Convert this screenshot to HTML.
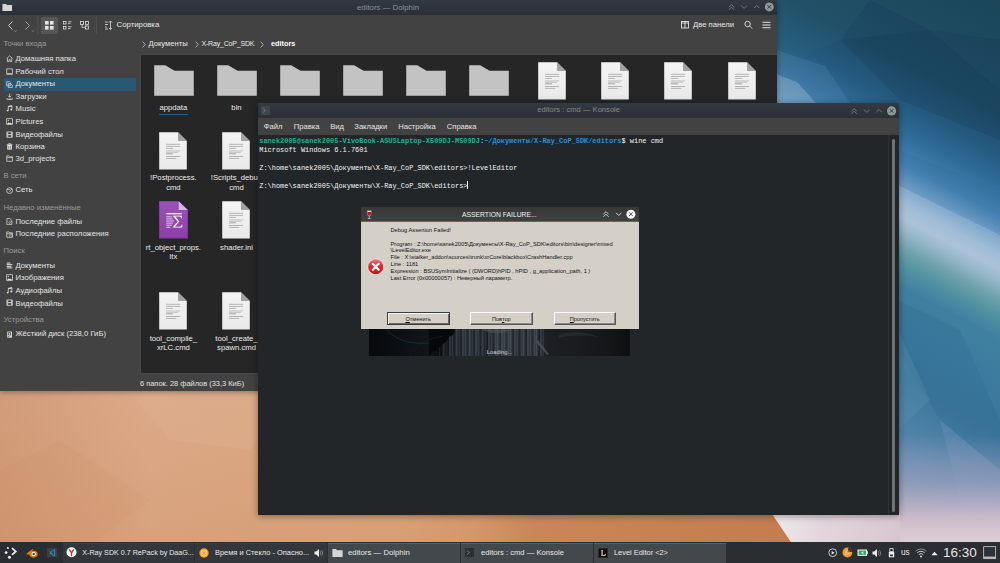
<!DOCTYPE html>
<html><head><meta charset="utf-8"><title>desktop</title>
<style>
*{box-sizing:border-box;margin:0;padding:0}
html,body{width:1000px;height:563px;overflow:hidden;background:#3d7394;font-family:"Liberation Sans",sans-serif;}
.abs,.abs *{position:absolute}
.abs .term span,.abs .btn u{position:static}
.t{position:absolute;white-space:pre;line-height:10px;height:10px;font-size:7.6px;color:#e8e8e8}
/* wallpaper */
#wp{left:0;top:0;width:1000px;height:563px}
/* dolphin */
#dol{left:0;top:0;width:776.6px;height:390.5px;background:#424242;box-shadow:0 1px 6px rgba(0,0,0,0.35)}
#dol .tb{left:0;top:0;width:776.6px;height:15px;background:linear-gradient(#323940,#2a2f35)}
#dol .view{left:139.5px;top:53.5px;width:637.1px;height:320.5px;background:#262626;border:1px solid #484848;border-right:none}
.sb .t{left:15.5px;color:#e4e4e4;font-size:7.7px}
.sb .h{left:3.5px;color:#9b9b9b}
.lab{position:absolute;width:70px;text-align:center;font-size:7.7px;line-height:9.3px;color:#ececec;white-space:pre}
/* konsole */
#kon{left:258.3px;top:102.7px;width:640.5px;height:412.5px;background:#222628;box-shadow:0 1px 7px rgba(0,0,0,0.4)}
#kon .tb{left:0;top:0;width:641px;height:15.5px;background:linear-gradient(#333940,#2b3035)}
#kon .mb{left:0;top:15.5px;width:641px;height:16.8px;background:#424242}
#kon .mb .t{color:#e6e6e6;top:3.4px}
.term{position:absolute;left:1px;font-family:"Liberation Mono",monospace;font-size:6.94px;line-height:9px;height:9px;white-space:pre;color:#f4f4f4}
.g{color:#1bb595;font-weight:bold}.b{color:#2c90d4;font-weight:bold}
/* dialog */
#dlg{left:361px;top:207.2px;width:278.2px;height:121.8px;background:#d4d0c8}
#dlg .tb{left:0;top:0;width:278.2px;height:14.8px;background:linear-gradient(#383838,#404040);border-bottom:1px solid #2c78a4}
#dlg .m{position:absolute;left:29.5px;font-size:5.7px;line-height:7px;height:7px;color:#111;white-space:pre}
.btn{position:absolute;top:104.5px;height:13.5px;width:62.5px;background:#d4d0c8;border:1px solid;border-color:#fbfbfb #555 #555 #fbfbfb;box-shadow:inset -1px -1px 0 #8d8a85;font-size:5.6px;line-height:12.4px;text-align:center;color:#111}
/* panel */
#pan{left:0;top:542px;width:1000px;height:21px;background:#2a2e32}
#pan .t{color:#e8e8e8;font-size:7.2px;top:5.5px}
.task{position:absolute;top:0.5px;height:21px;background:#43484d;border-top:1px solid #5a5f64}
.task.d{background:#33373c;border-top-color:#3a3f44}
</style></head><body>
<div class="abs" id="wp">
<svg width="1000" height="563" viewBox="0 0 1000 563">
<defs>
<linearGradient id="sky" gradientUnits="userSpaceOnUse" x1="1000" y1="0" x2="718.6" y2="529.8">
<stop offset="0.0000" stop-color="#183f55"/>
<stop offset="0.1667" stop-color="#1e4b65"/>
<stop offset="0.2283" stop-color="#255a80"/>
<stop offset="0.2717" stop-color="#2f6c99"/>
<stop offset="0.3167" stop-color="#4a85b3"/>
<stop offset="0.3450" stop-color="#7ba5cb"/>
<stop offset="0.3750" stop-color="#a0bcd6"/>
<stop offset="0.3967" stop-color="#abc3d9"/>
<stop offset="0.4167" stop-color="#94b6c8"/>
<stop offset="0.4417" stop-color="#6fa2ab"/>
<stop offset="0.4667" stop-color="#5292a2"/>
<stop offset="0.5000" stop-color="#3f80a0"/>
<stop offset="0.6333" stop-color="#3b769c"/>
<stop offset="0.7400" stop-color="#5a88ad"/>
<stop offset="0.8667" stop-color="#7a9ab8"/>
<stop offset="1.0000" stop-color="#8aa4c0"/>
</linearGradient>
<linearGradient id="haze" gradientUnits="userSpaceOnUse" x1="0" y1="435" x2="0" y2="545"><stop offset="0" stop-color="#a9a4c4" stop-opacity="0"/><stop offset="0.42" stop-color="#aca4c0" stop-opacity="0.55"/><stop offset="0.75" stop-color="#d0bdca" stop-opacity="0.95"/><stop offset="1" stop-color="#e0d0d6" stop-opacity="1"/></linearGradient>
<linearGradient id="pk" gradientUnits="userSpaceOnUse" x1="785" y1="0" x2="900" y2="0"><stop offset="0" stop-color="#ebe5e7"/><stop offset="0.3" stop-color="#e2d6dc"/><stop offset="1" stop-color="#d8c6cf"/></linearGradient>
<linearGradient id="sand" gradientUnits="userSpaceOnUse" x1="0" y1="0" x2="790" y2="0">
<stop offset="0" stop-color="#d29c7a"/>
<stop offset="0.19" stop-color="#dcaa88"/>
<stop offset="0.33" stop-color="#dba884"/>
<stop offset="0.5" stop-color="#dca87f"/>
<stop offset="0.6" stop-color="#d79d70"/>
<stop offset="0.68" stop-color="#cb895b"/>
<stop offset="1" stop-color="#c47e4e"/>
</linearGradient>
<linearGradient id="sandv" gradientUnits="userSpaceOnUse" x1="0" y1="395" x2="0" y2="545"><stop offset="0" stop-color="#c07848" stop-opacity="0"/><stop offset="1" stop-color="#c07848" stop-opacity="0.18"/></linearGradient>
</defs>
<rect x="0" y="0" width="1000" height="563" fill="url(#sky)"/>
<g>
<polygon points="776,0 870,0 840,40 776,70" fill="#2c6b74" opacity="0.22"/>
<polygon points="870,0 1000,0 1000,40 930,30" fill="#235c66" opacity="0.25"/>
<polygon points="840,40 930,30 1000,90 1000,140 900,100" fill="#123650" opacity="0.22"/>
<polygon points="776,74 797,82 816,103 776,103" fill="#a9c6dc" opacity="0.40"/>
<polygon points="776,50 825,66 850,103 816,103 797,82 776,74" fill="#6a9cc0" opacity="0.20"/>
<polygon points="898,150 1000,190 1000,235 898,185" fill="#2c6aa0" opacity="0.25"/>
<polygon points="898,300 960,330 1000,420 1000,470 940,420 898,350" fill="#2f6a92" opacity="0.30"/>
<polygon points="898,330 930,400 898,430" fill="#5f98b2" opacity="0.25"/>
<polygon points="940,420 1000,470 1000,520 960,500" fill="#7f9cc0" opacity="0.25"/>
</g>
<rect x="770" y="420" width="230" height="125" fill="url(#haze)"/>
<polygon points="0,380 760,380 795,545 0,545" fill="url(#sand)"/>
<polygon points="0,380 760,380 795,545 0,545" fill="url(#sandv)"/>
<polygon points="0,470 60,440 150,500 90,545 0,545" fill="#c88a62" opacity="0.12"/>
<polygon points="130,392 300,392 250,450 170,440" fill="#e6bc9c" opacity="0.18"/>
<polygon points="772,514 900,514 900,545 793,545" fill="url(#pk)"/>
</svg>
</div>

<!-- DOLPHIN -->
<div class="abs" id="dol">
<div class="tb"></div>
<svg style="left:2px;top:4.2px" width="10.500" height="7.200" viewBox="0 0 12 9"><path d="M0 0h4.500l1 1.200H12V9H0z" fill="#d6d6d6"/></svg>
<div class="t" style="left:357px;top:2.8px;color:#8d9094;font-size:7.8px">editors — Dolphin</div>
<!-- title buttons -->
<svg style="left:725px;top:1px" width="50" height="12" viewBox="0 0 50 12" fill="none" stroke="#79818a" stroke-width="0.9"><path d="M4 6.2l2.6-2.6 2.6 2.6M4 8.8l2.6-2.6 2.6 2.6"/><path d="M16.3 4.6l2.8 2.8 2.8-2.8"/><path d="M29 7.2l2.8-2.8 2.8 2.8"/><circle cx="44.3" cy="5.9" r="4.5" fill="#8b9998" stroke="none"/><path d="M42.5 4.1l3.6 3.6M46.1 4.1l-3.6 3.6" stroke="#2d3136" stroke-width="0.9"/></svg>
<!-- toolbar -->
<svg style="left:0;top:15px" width="200" height="22" viewBox="0 0 200 22" fill="none" stroke="#dcdcdc" stroke-width="0.9">
<path d="M12.500 6.500l-4 4 4 4"/><path d="M25.500 6.500l4 4-4 4" stroke="#a8a8a8"/><path d="M14.500 15.500l1 1 1-1M32 15.500l1 1 1-1" stroke-width="0.700" stroke="#b0b0b0"/>
<path d="M37.800 1.500v17.500M96.300 1.500v17.500" stroke="#565656" stroke-width="0.900"/>
<rect x="41" y="2" width="17" height="17" rx="1.5" fill="#565656" stroke="none"/>
<g fill="#e4e4e4" stroke="none"><rect x="45" y="6" width="3.6" height="3.6"/><rect x="50" y="6" width="3.6" height="3.6"/><rect x="45" y="11" width="3.6" height="3.6"/><rect x="50" y="11" width="3.6" height="3.6"/></g>
<g stroke-width="0.8"><rect x="63.4" y="6.4" width="2.6" height="2.6"/><rect x="63.4" y="11.4" width="2.6" height="2.6"/><path d="M68 6.8h3.5M68 8.6h2.5M68 11.8h3.5M68 13.6h2.5"/></g>
<g stroke-width="0.8"><rect x="80.4" y="6.4" width="3" height="3"/><rect x="85.4" y="6.4" width="3" height="3"/><rect x="85.4" y="11" width="3" height="3"/><path d="M82 9.4v3h3.4"/></g>
<g stroke-width="0.8"><path d="M105 7h3M105 9.5h3M105 12h2M105 14h3"/><path d="M110.5 6v8.5M109 13l1.5 1.5L112 13M109 7.5L110.5 6 112 7.5"/></g>
</svg>
<div class="t" style="left:116.5px;top:19.5px;font-size:7.8px;color:#e8e8e8">Сортировка</div>
<svg style="left:678px;top:15px" width="98" height="22" viewBox="0 0 98 22" fill="none" stroke="#e4e4e4" stroke-width="0.9"><rect x="3.5" y="6.5" width="7" height="6.5"/><path d="M7 6.5V13M3.5 8h7"/><circle cx="69.6" cy="9" r="2.7"/><path d="M71.6 11l2.6 2.6"/><path d="M84.5 7.3h8M84.5 10h8M84.5 12.7h8" stroke-width="1.1"/></svg>
<div class="t" style="left:693px;top:19.5px;font-size:7.7px">Две панели</div>
<!-- breadcrumb -->
<svg style="left:141.6px;top:41px" width="4" height="7" viewBox="0 0 4 7"><path d="M0.600 0.600L3.300 3.500 0.600 6.400" stroke="#cfcfcf" stroke-width="0.750" fill="none"/></svg>
<div class="t" style="left:148.5px;top:38.5px;font-size:7.6px">Документы</div>
<svg style="left:194.6px;top:41px" width="4" height="7" viewBox="0 0 4 7"><path d="M0.600 0.600L3.300 3.500 0.600 6.400" stroke="#cfcfcf" stroke-width="0.750" fill="none"/></svg>
<div class="t" style="left:201.5px;top:38.5px;font-size:7.05px;letter-spacing:-0.22px">X-Ray_CoP_SDK</div>
<svg style="left:260.4px;top:41px" width="4" height="7" viewBox="0 0 4 7"><path d="M0.600 0.600L3.300 3.500 0.600 6.400" stroke="#cfcfcf" stroke-width="0.750" fill="none"/></svg>
<div class="t" style="left:271px;top:38.5px;font-size:7.3px;font-weight:bold;color:#fff">editors</div>
<!-- sidebar -->
<div class="sb">
<div style="left:4px;top:77.5px;width:132px;height:13px;background:#285874"></div>
<div class="t h" style="top:39.0px">Точки входа</div>
<div class="t" style="top:53.8px">Домашняя папка</div>
<div class="t" style="top:67.3px">Рабочий стол</div>
<div class="t" style="top:79px">Документы</div>
<div class="t" style="top:92.4px">Загрузки</div>
<div class="t" style="top:103.8px">Music</div>
<div class="t" style="top:117.3px">Pictures</div>
<div class="t" style="top:130.0px">Видеофайлы</div>
<div class="t" style="top:142.4px">Корзина</div>
<div class="t" style="top:153.8px">3d_projects</div>
<div class="t h" style="top:171.2px">В сети</div>
<div class="t" style="top:185.0px">Сеть</div>
<div class="t h" style="top:203.0px">Недавно изменённые</div>
<div class="t" style="top:217.2px">Последние файлы</div>
<div class="t" style="top:229.0px">Последние расположения</div>
<div class="t h" style="top:246.4px">Поиск</div>
<div class="t" style="top:261.2px">Документы</div>
<div class="t" style="top:272.6px">Изображения</div>
<div class="t" style="top:286.4px">Аудиофайлы</div>
<div class="t" style="top:298.8px">Видеофайлы</div>
<div class="t h" style="top:315.2px">Устройства</div>
<div class="t" style="top:329.0px">Жёсткий диск (238,0 ГиБ)</div>
</div>
<div id="sbi">
<svg style="left:5.600px;top:55.4px" width="7.200" height="7.200" viewBox="0 0 8 8"><path d="M0.6 4.2L4 0.9l3.4 3.3M1.6 3.6v3.8h1.7V5.2h1.4v2.2h1.7V3.6" stroke="#e2e2e2" stroke-width="0.8" fill="none"/></svg>
<svg style="left:5.600px;top:67.8px" width="7.200" height="7.200" viewBox="0 0 8 8"><rect x="0.8" y="1" width="6.4" height="5" stroke="#e2e2e2" stroke-width="0.8" fill="none"/><path d="M0.4 7.4h7.2" stroke="#e2e2e2" stroke-width="0.8" fill="none"/></svg>
<svg style="left:5.600px;top:80.6px" width="7.200" height="7.200" viewBox="0 0 8 8"><path d="M0.8 0.8h3l1 1v3.6h-4z" stroke="#e2e2e2" stroke-width="0.8" fill="none"/><path d="M2.6 3h2.6l1.8 1.6v2.8H2.6z" stroke="#e2e2e2" stroke-width="0.8" fill="none"/></svg>
<svg style="left:5.600px;top:93.0px" width="7.200" height="7.200" viewBox="0 0 8 8"><path d="M4 0.5v4M2.2 3l1.8 1.8L5.8 3M0.8 5.6c0 1 .6 1.2 1.4 1.2h3.6c.8 0 1.4-.2 1.4-1.2M0.6 7.6h6.8" stroke="#e2e2e2" stroke-width="0.8" fill="none"/></svg>
<svg style="left:5.600px;top:105.4px" width="7.200" height="7.200" viewBox="0 0 8 8"><path d="M2.6 6V1.4l4-0.8V5" stroke="#e2e2e2" stroke-width="0.8" fill="none"/><ellipse cx="1.8" cy="6.2" rx="1.1" ry="0.9" fill="#e2e2e2"/><ellipse cx="5.8" cy="5.2" rx="1.1" ry="0.9" fill="#e2e2e2"/><path d="M2.6 1.4l4-.8v1.2l-4 .8z" fill="#e2e2e2"/></svg>
<svg style="left:5.600px;top:117.8px" width="7.200" height="7.200" viewBox="0 0 8 8"><rect x="0.8" y="0.8" width="6.4" height="6.4" stroke="#e2e2e2" stroke-width="0.8" fill="none"/><path d="M1.2 6.6l1.8-2 1.2 1.2 1-.8 1.6 1.6z" fill="#e2e2e2"/><circle cx="2.6" cy="2.6" r="0.7" fill="#e2e2e2"/></svg>
<svg style="left:5.600px;top:130.6px" width="7.200" height="7.200" viewBox="0 0 8 8"><rect x="0.6" y="0.6" width="6.8" height="6.8" fill="#e2e2e2"/><rect x="2.4" y="1.4" width="3.2" height="2.2" fill="#424242"/><rect x="2.4" y="4.6" width="3.2" height="2" fill="#424242"/><path d="M1.1 1.6h.7M1.1 3.2h.7M1.1 4.8h.7M1.1 6.4h.7M6.2 1.6h.7M6.2 3.2h.7M6.2 4.8h.7M6.2 6.4h.7" stroke="#424242" stroke-width="0.6"/></svg>
<svg style="left:5.600px;top:143.0px" width="7.200" height="7.200" viewBox="0 0 8 8"><path d="M1.4 2.2h5.2v5.2H1.4z" fill="#e2e2e2"/><path d="M0.8 1.6h6.4M3 1.4V0.6h2v.8" stroke="#e2e2e2" stroke-width="0.8" fill="none"/><path d="M3 3.4v3M5 3.4v3" stroke="#424242" stroke-width="0.6"/></svg>
<svg style="left:5.600px;top:155.4px" width="7.200" height="7.200" viewBox="0 0 8 8"><path d="M0.8 1h2.6l.8 1h3v5H0.8zM0.8 3h6.4" stroke="#e2e2e2" stroke-width="0.8" fill="none"/></svg>
<svg style="left:5.600px;top:186.6px" width="7.200" height="7.200" viewBox="0 0 8 8"><circle cx="4" cy="4" r="3.3" stroke="#e2e2e2" stroke-width="0.8" fill="none"/><path d="M1.2 2.6c1.5 1 2.6-.4 3.6.6s-1.2 1.4-.4 2.6M5.6 1.4c-.4 1 .6 1.6 1.6 1.6" stroke="#e2e2e2" stroke-width="0.8" fill="none"/></svg>
<svg style="left:5.600px;top:217.6px" width="7.200" height="7.200" viewBox="0 0 8 8"><path d="M1 0.6h3.4l2 2v4.8H1z" stroke="#e2e2e2" stroke-width="0.8" fill="none"/><circle cx="5" cy="5.2" r="1.7" fill="#424242" stroke="#e2e2e2" stroke-width="0.6"/><path d="M5 4.4v.9h.8" stroke="#e2e2e2" stroke-width="0.5" fill="none"/></svg>
<svg style="left:5.600px;top:230.6px" width="7.200" height="7.200" viewBox="0 0 8 8"><path d="M0.8 1h2.6l.8 1h3v5H0.8zM0.8 3h6.4" stroke="#e2e2e2" stroke-width="0.8" fill="none"/><circle cx="5.2" cy="5.2" r="1.6" fill="#424242" stroke="#e2e2e2" stroke-width="0.6"/><path d="M5.2 4.4v.9h.7" stroke="#e2e2e2" stroke-width="0.5" fill="none"/></svg>
<svg style="left:5.600px;top:261.8px" width="7.200" height="7.200" viewBox="0 0 8 8"><path d="M0.8 1.2h4M0.8 3h6.4M0.8 4.8h5M0.8 6.6h6.4" stroke="#e2e2e2" stroke-width="1.1" fill="none"/></svg>
<svg style="left:5.600px;top:274.2px" width="7.200" height="7.200" viewBox="0 0 8 8"><rect x="0.8" y="0.8" width="6.4" height="6.4" stroke="#e2e2e2" stroke-width="0.8" fill="none"/><path d="M1.2 6.6l1.8-2 1.2 1.2 1-.8 1.6 1.6z" fill="#e2e2e2"/><circle cx="2.6" cy="2.6" r="0.7" fill="#e2e2e2"/></svg>
<svg style="left:5.600px;top:287.0px" width="7.200" height="7.200" viewBox="0 0 8 8"><path d="M2.6 6V1.4l4-0.8V5" stroke="#e2e2e2" stroke-width="0.8" fill="none"/><ellipse cx="1.8" cy="6.2" rx="1.1" ry="0.9" fill="#e2e2e2"/><ellipse cx="5.8" cy="5.2" rx="1.1" ry="0.9" fill="#e2e2e2"/><path d="M2.6 1.4l4-.8v1.2l-4 .8z" fill="#e2e2e2"/></svg>
<svg style="left:5.600px;top:299.4px" width="7.200" height="7.200" viewBox="0 0 8 8"><rect x="0.6" y="0.6" width="6.8" height="6.8" fill="#e2e2e2"/><rect x="2.4" y="1.4" width="3.2" height="2.2" fill="#424242"/><rect x="2.4" y="4.6" width="3.2" height="2" fill="#424242"/><path d="M1.1 1.6h.7M1.1 3.2h.7M1.1 4.8h.7M1.1 6.4h.7M6.2 1.6h.7M6.2 3.2h.7M6.2 4.8h.7M6.2 6.4h.7" stroke="#424242" stroke-width="0.6"/></svg>
<svg style="left:5.600px;top:330.6px" width="7.200" height="7.200" viewBox="0 0 8 8"><rect x="1.4" y="0.6" width="5.2" height="6.8" fill="#e2e2e2"/><rect x="2.4" y="1.4" width="3.2" height="3.4" fill="#424242"/><circle cx="4" cy="3.1" r="1" fill="#e2e2e2"/><rect x="2.4" y="5.8" width="1.4" height="0.8" fill="#424242"/></svg>
</div><!--/sbi-->
<div class="view"></div>
<div class="t" style="left:140px;top:378.5px;font-size:7.45px;color:#e2e2e2">6 папок. 28 файлов (33,3 КиБ)</div>
<svg style="left:0;top:0" width="0" height="0"><defs><linearGradient id="pg" x1="0" y1="0" x2="0" y2="1"><stop offset="0" stop-color="#9a52b6"/><stop offset="1" stop-color="#8a40a6"/></linearGradient><linearGradient id="dg" x1="0" y1="0" x2="0" y2="1"><stop offset="0" stop-color="#f4f4f4"/><stop offset="1" stop-color="#e9e9e9"/></linearGradient></defs></svg>
<div id="files">
<svg style="left:153.7px;top:65.3px" width="40" height="31" viewBox="0 0 40 31"><path d="M0.2 0.3h11l9.4 5.4h19.2v25H0.2z" fill="#c3c3c3"/></svg>
<svg style="left:216.8px;top:65.3px" width="40" height="31" viewBox="0 0 40 31"><path d="M0.2 0.3h11l9.4 5.4h19.2v25H0.2z" fill="#c3c3c3"/></svg>
<svg style="left:280.0px;top:65.3px" width="40" height="31" viewBox="0 0 40 31"><path d="M0.2 0.3h11l9.4 5.4h19.2v25H0.2z" fill="#c3c3c3"/></svg>
<svg style="left:343.1px;top:65.3px" width="40" height="31" viewBox="0 0 40 31"><path d="M0.2 0.3h11l9.4 5.4h19.2v25H0.2z" fill="#c3c3c3"/></svg>
<svg style="left:406.3px;top:65.3px" width="40" height="31" viewBox="0 0 40 31"><path d="M0.2 0.3h11l9.4 5.4h19.2v25H0.2z" fill="#c3c3c3"/></svg>
<svg style="left:469.4px;top:65.3px" width="40" height="31" viewBox="0 0 40 31"><path d="M0.2 0.3h11l9.4 5.4h19.2v25H0.2z" fill="#c3c3c3"/></svg>
<svg style="left:538.1px;top:61.8px" width="28" height="38" viewBox="0 0 28 38" preserveAspectRatio="none"><path d="M0.200 0.200h18.800l8.800 8.800v28.600H0.200z" fill="url(#dg)"/><path d="M19 0.200l8.800 8.800H19z" fill="#a2a2a2"/><g stroke="#a6a6a6" stroke-width="0.800"><path d="M7 12.300h14.100M7 14.400h14.100M7 16.400h6.900M7 24.500h14.100M7 26.400h10.200"/></g><g stroke="#bdbdbd" stroke-width="0.900"><path d="M7 18.900h14.100M7 20.300h12"/></g><path d="M7 21.800h6.900" stroke="#9c9c9c" stroke-width="0.900"/></svg>
<svg style="left:601.3px;top:61.8px" width="28" height="38" viewBox="0 0 28 38" preserveAspectRatio="none"><path d="M0.200 0.200h18.800l8.800 8.800v28.600H0.200z" fill="url(#dg)"/><path d="M19 0.200l8.800 8.800H19z" fill="#a2a2a2"/><g stroke="#a6a6a6" stroke-width="0.800"><path d="M7 12.300h14.100M7 14.400h14.100M7 16.400h6.900M7 24.500h14.100M7 26.400h10.200"/></g><g stroke="#bdbdbd" stroke-width="0.900"><path d="M7 18.900h14.100M7 20.300h12"/></g><path d="M7 21.800h6.900" stroke="#9c9c9c" stroke-width="0.900"/></svg>
<svg style="left:664.4px;top:61.8px" width="28" height="38" viewBox="0 0 28 38" preserveAspectRatio="none"><path d="M0.200 0.200h18.800l8.800 8.800v28.600H0.200z" fill="url(#dg)"/><path d="M19 0.200l8.800 8.800H19z" fill="#a2a2a2"/><g stroke="#a6a6a6" stroke-width="0.800"><path d="M7 12.300h14.100M7 14.400h14.100M7 16.400h6.900M7 24.500h14.100M7 26.400h10.200"/></g><g stroke="#bdbdbd" stroke-width="0.900"><path d="M7 18.900h14.100M7 20.300h12"/></g><path d="M7 21.800h6.900" stroke="#9c9c9c" stroke-width="0.900"/></svg>
<svg style="left:727.6px;top:61.8px" width="28" height="38" viewBox="0 0 28 38" preserveAspectRatio="none"><path d="M0.200 0.200h18.800l8.800 8.800v28.600H0.200z" fill="url(#dg)"/><path d="M19 0.200l8.800 8.800H19z" fill="#a2a2a2"/><g stroke="#a6a6a6" stroke-width="0.800"><path d="M7 12.300h14.100M7 14.400h14.100M7 16.400h6.900M7 24.500h14.100M7 26.400h10.200"/></g><g stroke="#bdbdbd" stroke-width="0.900"><path d="M7 18.900h14.100M7 20.300h12"/></g><path d="M7 21.800h6.900" stroke="#9c9c9c" stroke-width="0.900"/></svg>
<div class="lab" style="left:138.4px;top:103.4px">appdata</div>
<div style="left:158.5px;top:113.5px;width:29px;height:0.8px;background:#2b5f7d"></div>
<div class="lab" style="left:201.5px;top:103.4px">bin</div>
<svg style="left:159.3px;top:131.8px" width="28" height="38" viewBox="0 0 28 38" preserveAspectRatio="none"><path d="M0.200 0.200h18.800l8.800 8.800v28.600H0.200z" fill="url(#dg)"/><path d="M19 0.200l8.800 8.800H19z" fill="#a2a2a2"/><g stroke="#a6a6a6" stroke-width="0.800"><path d="M7 12.300h14.100M7 14.400h14.100M7 16.400h6.900M7 24.500h14.100M7 26.400h10.200"/></g><g stroke="#bdbdbd" stroke-width="0.900"><path d="M7 18.900h14.100M7 20.300h12"/></g><path d="M7 21.800h6.900" stroke="#9c9c9c" stroke-width="0.900"/></svg>
<svg style="left:222.4px;top:131.8px" width="28" height="38" viewBox="0 0 28 38" preserveAspectRatio="none"><path d="M0.200 0.200h18.800l8.800 8.800v28.600H0.200z" fill="url(#dg)"/><path d="M19 0.200l8.800 8.800H19z" fill="#a2a2a2"/><g stroke="#a6a6a6" stroke-width="0.800"><path d="M7 12.300h14.100M7 14.400h14.100M7 16.400h6.900M7 24.500h14.100M7 26.400h10.200"/></g><g stroke="#bdbdbd" stroke-width="0.900"><path d="M7 18.900h14.100M7 20.300h12"/></g><path d="M7 21.800h6.900" stroke="#9c9c9c" stroke-width="0.900"/></svg>
<div class="lab" style="left:138.4px;top:173.3px">!Postprocess.
cmd</div>
<div class="lab" style="left:201.5px;top:173.3px">!Scripts_debug
cmd</div>
<svg style="left:159.3px;top:201.3px" width="29" height="38" viewBox="0 0 28 38" preserveAspectRatio="none"><path d="M0.200 0.200h18.800l8.800 8.800v28.600H0.200z" fill="url(#pg)"/><path d="M19 0.200l8.800 8.800H19z" fill="#d9b3e6"/><path d="M7 12.700h15" stroke="#ecd9f2" stroke-width="1.500"/><g stroke="#f3e6f7" stroke-width="0.800" fill="none"><path d="M7 15.800h5.500M7 17.900h6.500M7 20h7.500M7 22.100h6.500M7 24.200h5.500M7 26.300h4"/></g><path d="M13.400 14.600h8.800v2.800h-.9c-.2-1.200-.7-1.600-2-1.600h-3.200l3.700 4.600-4.100 5h4.100c1.300 0 1.800-.5 2.100-1.900h.9l-.4 3.300h-9.100v-.8l4.600-5.600-4.500-5.200z" fill="#fff" stroke="#9248ad" stroke-width="0.400"/></svg>
<svg style="left:222.4px;top:201.3px" width="28" height="38" viewBox="0 0 28 38" preserveAspectRatio="none"><path d="M0.200 0.200h18.800l8.800 8.800v28.600H0.200z" fill="url(#dg)"/><path d="M19 0.200l8.800 8.800H19z" fill="#a2a2a2"/><g stroke="#a6a6a6" stroke-width="0.800"><path d="M7 12.300h14.100M7 14.400h14.100M7 16.400h6.900M7 24.500h14.100M7 26.400h10.200"/></g><g stroke="#bdbdbd" stroke-width="0.900"><path d="M7 18.900h14.100M7 20.300h12"/></g><path d="M7 21.800h6.900" stroke="#9c9c9c" stroke-width="0.900"/></svg>
<div class="lab" style="left:138.4px;top:242.8px">rt_object_props.
ltx</div>
<div class="lab" style="left:201.5px;top:242.8px">shader.ini</div>
<svg style="left:159.3px;top:292.0px" width="28" height="38" viewBox="0 0 28 38" preserveAspectRatio="none"><path d="M0.200 0.200h18.800l8.800 8.800v28.600H0.200z" fill="url(#dg)"/><path d="M19 0.200l8.800 8.800H19z" fill="#a2a2a2"/><g stroke="#a6a6a6" stroke-width="0.800"><path d="M7 12.300h14.100M7 14.400h14.100M7 16.400h6.900M7 24.500h14.100M7 26.400h10.200"/></g><g stroke="#bdbdbd" stroke-width="0.900"><path d="M7 18.900h14.100M7 20.300h12"/></g><path d="M7 21.800h6.900" stroke="#9c9c9c" stroke-width="0.900"/></svg>
<svg style="left:222.4px;top:292.0px" width="28" height="38" viewBox="0 0 28 38" preserveAspectRatio="none"><path d="M0.200 0.200h18.800l8.800 8.800v28.600H0.200z" fill="url(#dg)"/><path d="M19 0.200l8.800 8.800H19z" fill="#a2a2a2"/><g stroke="#a6a6a6" stroke-width="0.800"><path d="M7 12.300h14.100M7 14.400h14.100M7 16.400h6.900M7 24.500h14.100M7 26.400h10.200"/></g><g stroke="#bdbdbd" stroke-width="0.900"><path d="M7 18.900h14.100M7 20.300h12"/></g><path d="M7 21.800h6.900" stroke="#9c9c9c" stroke-width="0.900"/></svg>
<div class="lab" style="left:138.4px;top:333.8px">tool_compile_
xrLC.cmd</div>
<div class="lab" style="left:201.5px;top:333.8px">tool_create_
spawn.cmd</div>
</div><!--/files-->
</div>

<!-- KONSOLE -->
<div class="abs" id="kon">
<div class="tb"></div>
<div class="mb">
<div class="t" style="left:5.5px">Файл</div>
<div class="t" style="left:35.5px">Правка</div>
<div class="t" style="left:72px">Вид</div>
<div class="t" style="left:96px">Закладки</div>
<div class="t" style="left:140px">Настройка</div>
<div class="t" style="left:188.5px">Справка</div>
</div>
<svg style="left:3px;top:3px" width="9" height="9" viewBox="0 0 9 9"><rect width="9" height="9" fill="#40464c"/><path d="M2 2.500l2.500 2L2 6.500" stroke="#7f8589" stroke-width="0.8" fill="none"/></svg>
<div class="t" style="left:279px;top:2.8px;color:#84888c;font-size:7.6px">editors : cmd — Konsole</div>
<svg style="left:590px;top:2px" width="50" height="12" viewBox="0 0 50 12" fill="none" stroke="#79818a" stroke-width="0.9"><path d="M3.5 6.2l2.6-2.6 2.6 2.6M3.5 8.8l2.6-2.6 2.6 2.6"/><path d="M16 4.6l2.8 2.8 2.8-2.8"/><path d="M28.2 7.2l2.8-2.8 2.8 2.8"/><circle cx="43.6" cy="5.9" r="4.6" fill="#8b9998" stroke="none"/><path d="M41.8 4.1l3.6 3.6M45.4 4.1l-3.6 3.6" stroke="#2d3136" stroke-width="0.9"/></svg>
<div class="term" style="top:34.4px"><span class="g">sanek2005@sanek2005-VivoBook-ASUSLaptop-X509DJ-M509DJ</span>:<span class="b">~/Документы/X-Ray_CoP_SDK/editors</span>$ wine cmd</div>
<div class="term" style="top:43.3px">Microsoft Windows 6.1.7601</div>
<div class="term" style="top:61.3px">Z:\home\sanek2005\Документы\X-Ray_CoP_SDK\editors&gt;!LevelEditor</div>
<div class="term" style="top:78px">Z:\home\sanek2005\Документы\X-Ray_CoP_SDK\editors&gt;<span style="display:inline-block;position:relative;width:0.7px;height:8px;background:#eee;vertical-align:-1.5px"></span></div>
<div style="left:633.9px;top:36.3px;width:3px;height:373px;background:#6f7376;border-radius:1.5px"></div>
<div style="left:629.8px;top:32.3px;width:0.7px;height:380px;background:#2d3235"></div>
</div>

<!-- SPLASH -->
<div class="abs" style="position:absolute;left:369.3px;top:329px;width:261px;height:26.6px;background:#07090b;overflow:hidden">
<div style="left:0;top:0;width:261px;height:26.6px;background:linear-gradient(90deg,#07090c 0%,#0b0e12 10%,#11151a 22%,#0a0c0f 27%,#1c2128 31%,#2b313a 38%,#22272f 45%,#333941 52%,#262b32 58%,#30353b 63%,#1c1f23 68%,#1a1c1f 80%,#141618 92%,#0d0e10 100%)"></div>
<div style="left:70px;top:0;width:106px;height:26.6px;background:repeating-linear-gradient(90deg,rgba(150,160,175,0.22) 0px,rgba(150,160,175,0) 1.5px,rgba(0,0,0,0.25) 3px,rgba(170,180,190,0.18) 4.2px,rgba(0,0,0,0) 6.5px)"></div>
<svg style="left:0;top:0" width="261" height="27" viewBox="0 0 261 27"><path d="M60 27L64 22l5-1 3-5 5-3 3-5 4-2 2-6H60z" fill="#06080a"/><path d="M18 0c6 9 20 16 42 14" stroke="#1d2935" stroke-width="1" fill="none"/><path d="M40 27c8-12 20-18 34-20" stroke="#141b22" stroke-width="1" fill="none"/><path d="M112 0c8 5 22 6 30 1z" fill="#4a5058" opacity="0.7"/><path d="M166 12l12 14 2-1-11-14z" fill="#4b5056" opacity="0.8"/><path d="M190 6c10-4 26-4 40 2-14-2-28-2-40 1z" fill="#2c2f33" opacity="0.7"/></svg>
<div class="t" style="left:117.5px;top:17.5px;font-size:5.8px;color:#d4d4d4">Loading...</div>
</div>

<!-- DIALOG -->
<div class="abs" id="dlg">
<div class="tb"></div>
<svg style="left:5px;top:2.4px" width="6.500" height="9.600" viewBox="0 0 8 11"><path d="M1.5 0.5h5l-0.3 4.2a2.2 2.2 0 0 1-4.4 0z" fill="#e8dcdc" stroke="#b0b0b0" stroke-width="0.4"/><path d="M1.7 2.2h4.6l-0.2 2.4a2.1 2.1 0 0 1-4.2 0z" fill="#c4121a"/><path d="M4 6.8v3M2.2 10h3.6" stroke="#ddd" stroke-width="0.8"/></svg>
<div class="t" style="left:101px;top:2.4px;font-size:6.75px;color:#f2f2f2">ASSERTION FAILURE...</div>
<svg style="left:238px;top:1px" width="40" height="12" viewBox="0 0 40 12" fill="none" stroke="#dedede" stroke-width="0.9"><path d="M4.4 6.2l2.6-2.6 2.6 2.6M4.4 8.8l2.6-2.6 2.6 2.6"/><path d="M17 4.8l2.7 2.7 2.7-2.7"/><circle cx="31.9" cy="6.2" r="4.5" fill="#f4f4f4" stroke="none"/><path d="M30.1 4.4l3.6 3.6M33.7 4.4l-3.6 3.6" stroke="#404040" stroke-width="0.9"/></svg>
<div class="m" style="top:19.5px">Debug Assertion Failed!</div>
<div class="m" style="top:33.5px">Program : Z:\home\sanek2005\Документы\X-Ray_CoP_SDK\editors\bin\designer\mixed</div>
<div class="m" style="top:40.3px">\LevelEditor.exe</div>
<div class="m" style="top:47.2px">File : X:\stalker_addon\sources\trunk\xrCore\blackbox\CrashHandler.cpp</div>
<div class="m" style="top:54.2px">Line : 1181</div>
<div class="m" style="top:61px">Expression : BSUSymInitialize ( (DWORD)hPID , hPID , g_application_path, 1 )</div>
<div class="m" style="top:67.7px">Last Error (0x00000057) : Неверный параметр.</div>
<svg style="left:6px;top:51px" width="17.5" height="17.5" viewBox="0 0 16 16"><defs><linearGradient id="er" x1="0" y1="0" x2="0" y2="1"><stop offset="0" stop-color="#f0787c"/><stop offset="0.45" stop-color="#de2a30"/><stop offset="1" stop-color="#c4141b"/></linearGradient></defs><circle cx="8" cy="8" r="7.700" fill="#e4dede"/><circle cx="8" cy="8" r="6.900" fill="url(#er)"/><path d="M5.300 5.300l5.400 5.400M10.700 5.300l-5.400 5.400" stroke="#fff" stroke-width="2" stroke-linecap="round"/></svg>
<div class="btn" style="left:26px;border-color:#3c3c3c;box-shadow:inset 1px 1px 0 #f4f4f4,inset -1px -1px 0 #6a6864"><u>О</u>тменить</div>
<div class="btn" style="left:109px">Пов<u>т</u>ор</div>
<div class="btn" style="left:192.5px"><u>П</u>ропустить</div>
</div>

<!-- PANEL -->
<div class="abs" id="pan">
<div class="task d" style="left:62.5px;width:131.8px"></div>
<div class="task d" style="left:195.3px;width:131.8px"></div>
<div class="task" style="left:328.1px;width:131.8px"></div>
<div class="task" style="left:460.9px;width:131.8px"></div>
<div class="task" style="left:593.7px;width:132.8px"></div>
<div class="t" style="left:82.3px;font-size:7.15px">X-Ray SDK 0.7 RePack by DaaG...</div>
<div class="t" style="left:215px;font-size:7.44px">Время и Стекло - Опасно...</div>
<div class="t" style="left:348px;font-size:7.78px">editors — Dolphin</div>
<div class="t" style="left:481px;font-size:7.62px">editors : cmd — Konsole</div>
<div class="t" style="left:614px;font-size:7.42px">Level Editor &lt;2&gt;</div>
<div class="t" style="left:901px;top:6.2px;font-size:8.2px">us</div>
<div class="t" style="left:943px;top:1.5px;font-size:13.5px;line-height:18px;height:18px;color:#e4e6e8">16:30</div>
<div id="picons">
<svg style="left:2.5px;top:3.5px" width="15" height="15" viewBox="0 0 16 16"><circle cx="3.3" cy="7" r="1.5" fill="#ececec"/><circle cx="6.9" cy="12" r="1.6" fill="#ececec"/><circle cx="5.2" cy="2.2" r="1.1" fill="#ececec"/><path d="M9.6 2.2l4 3.6-4 3.6" stroke="#ececec" stroke-width="1.9" fill="none"/></svg>
<svg style="left:26px;top:5px" width="12.5" height="10.8" viewBox="0 0 15 13"><path d="M1 7.6l6.6-5c.6-.4 1.2.3.7.8L7 4.6h2.6c2.6.2 4.6 2 4.6 4.2s-2.3 4-5 4-4.8-1.6-4.9-3.6L1.600 9c-.9.2-1.300-.9-.6-1.400z" fill="#ea7600"/><circle cx="9.200" cy="8.400" r="2.600" fill="#fff"/><circle cx="9.200" cy="8.400" r="1.500" fill="#265787"/></svg>
<svg style="left:46.5px;top:5.5px" width="10.5" height="9.5" viewBox="0 0 10.5 9.5"><rect width="10.500" height="9.500" fill="#3a4046"/><path d="M7.600 1.400v6.700L3 4.750z" fill="none" stroke="#2489ca" stroke-width="1"/><path d="M2.600 3.200l3.400 3.100M2.600 6.300L4 5.100" stroke="#2489ca" stroke-width="0.900" fill="none"/></svg>
<svg style="left:66px;top:5px" width="11" height="11" viewBox="0 0 11 11"><circle cx="5.500" cy="5.300" r="5" fill="#fafafa"/><path d="M3.200 2.400l2.300 3.400 2.300-3.400M5.500 5.600v3.600" stroke="#e0202a" stroke-width="1.300" fill="none"/></svg>
<svg style="left:199px;top:5.5px" width="10" height="10" viewBox="0 0 10 10"><circle cx="5" cy="5" r="4.700" fill="#f39c1f"/><circle cx="5" cy="5" r="3.400" fill="#fbd38a"/><path d="M5 1.800v6.400M1.800 5h6.400M2.700 2.700l4.600 4.600M7.300 2.700L2.700 7.300" stroke="#f39c1f" stroke-width="0.700"/></svg>
<svg style="left:314px;top:5.5px" width="10" height="10" viewBox="0 0 10 10"><path d="M0.500 3.500h1.800L5 1v8L2.300 6.500H0.500z" fill="#ececec"/><path d="M6.200 3.200c.9.900.9 2.700 0 3.600M7.400 2c1.600 1.600 1.600 4.400 0 6" stroke="#9a9da0" stroke-width="0.700" fill="none"/></svg>
<svg style="left:332px;top:6.8px" width="11" height="8.2" viewBox="0 0 10 8"><path d="M0 0h3.600l.9 1.100H10V8H0z" fill="#d6d6d6"/></svg>
<svg style="left:465px;top:5.5px" width="9" height="9" viewBox="0 0 9 9"><rect width="9" height="9" fill="#2c3034"/><path d="M2 2.500l2.500 2L2 6.500" stroke="#8d9195" stroke-width="0.800" fill="none"/></svg>
<svg style="left:598px;top:5.5px" width="10" height="10" viewBox="0 0 10 10"><rect width="10" height="10" fill="#14100f"/><rect x="0.400" y="0.400" width="9.200" height="9.200" fill="none" stroke="#4a3a36" stroke-width="0.500"/><path d="M3 2.200h2.200v.5h-.6v4.200h1.600c.5 0 .8-.400.900-1.200h.5v2H3v-.5h.600V2.700H3z" fill="#f4f4f4"/></svg>
<svg style="left:828px;top:6px" width="9.5" height="9.5" viewBox="0 0 9.5 9.5"><circle cx="4.700" cy="4.700" r="3.900" stroke="#ececec" stroke-width="0.800" fill="none"/><path d="M3.700 2.900l2.800 1.800-2.800 1.800z" fill="#ececec"/></svg>
<svg style="left:842px;top:5px" width="11" height="11" viewBox="0 0 11 11"><circle cx="5.400" cy="5.500" r="4.900" fill="#f29b30"/><path d="M5.400 5.500L6.600 0.800A4.900 4.900 0 0 1 10.200 4.600z" fill="#3a2c28"/><circle cx="5.400" cy="5.500" r="2.800" fill="#f6b565"/><path d="M5.400 5.500L6.600 0.800A4.900 4.900 0 0 1 10.200 4.600z" fill="#3a2c28" opacity="0.6"/></svg>
<svg style="left:856.5px;top:7px" width="11.5" height="7.5" viewBox="0 0 11.5 7.5"><rect x="0.500" y="0.500" width="9.600" height="6.400" fill="#ececec"/><rect x="10.100" y="2.300" width="1" height="2.800" fill="#ececec"/><rect x="1.600" y="1.600" width="7.400" height="4.200" fill="#27ae60"/><path d="M6.400 2.200L4 3.700l2.400 1.500z" fill="#ececec"/></svg>
<svg style="left:872px;top:5.5px" width="10" height="10" viewBox="0 0 10 10"><path d="M0.500 3.500h1.800L5 1v8L2.300 6.500H0.500z" fill="#ececec"/><path d="M6.200 3.200c.9.900.9 2.700 0 3.600M7.400 2c1.600 1.600 1.600 4.400 0 6" stroke="#9a9da0" stroke-width="0.700" fill="none"/></svg>
<svg style="left:887.5px;top:5.5px" width="7" height="10" viewBox="0 0 7 10"><path d="M1.800 0.500h3.400v3.200H1.800z" fill="none" stroke="#ececec" stroke-width="0.800"/><rect x="0.800" y="3.700" width="5.400" height="5.600" fill="#ececec"/><rect x="2" y="6.600" width="3" height="1.600" fill="#2b2f33"/></svg>
<svg style="left:914.5px;top:5.5px" width="12" height="10" viewBox="0 0 12 10"><path d="M0.600 3.200a7.600 7.600 0 0 1 10.800 0" stroke="#a8abad" stroke-width="0.800" fill="none"/><path d="M2.200 4.900a5.300 5.300 0 0 1 7.600 0" stroke="#ececec" stroke-width="0.800" fill="none"/><path d="M3.800 6.600a3.100 3.100 0 0 1 4.400 0" stroke="#ececec" stroke-width="0.800" fill="none"/><circle cx="6" cy="8.500" r="0.900" fill="#ececec"/></svg>
<svg style="left:930.5px;top:8.5px" width="7" height="5" viewBox="0 0 7 5"><path d="M0.300 4.200L3.500 0.800l3.200 3.400z" fill="#ececec"/></svg>
<svg style="left:983px;top:4px" width="13.5" height="13.5" viewBox="0 0 13.5 13.5"><rect x="0.700" y="0.700" width="12" height="12" fill="#2e3236" stroke="#e4e4e4" stroke-width="0.700"/><rect x="0.700" y="10.600" width="12" height="2.100" fill="#b9bbbd"/></svg>
</div><!--/picons-->
</div>
</body></html>
